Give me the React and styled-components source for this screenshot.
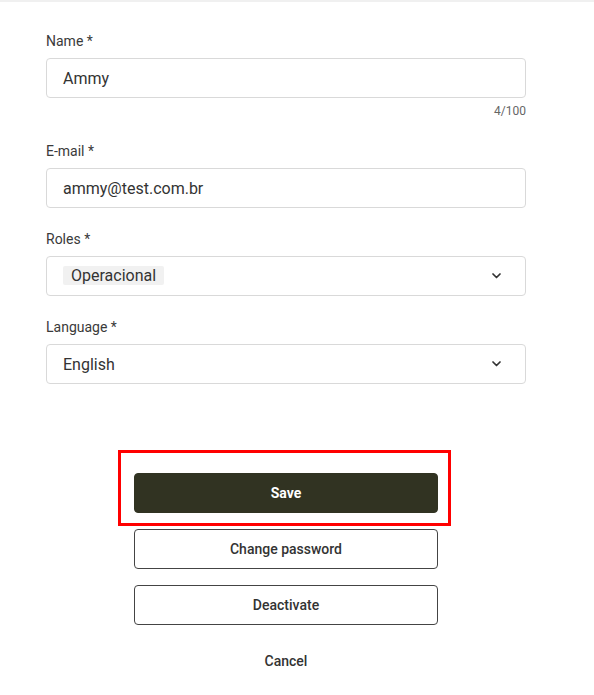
import React from "react";
import styled, { createGlobalStyle } from "styled-components";

const GlobalStyle = createGlobalStyle`
  html, body {
    margin: 0;
    padding: 0;
    background: #ffffff;
    font-family: Roboto, "Liberation Sans", Arial, sans-serif;
    color: #333333;
  }
`;

const Page = styled.div`
  border-top: 2px solid #f0f0f0;
  width: 594px;
  min-height: 693px;
  box-sizing: border-box;
`;

const Form = styled.form`
  width: 480px;
  margin-left: 46px;
  padding-top: 29px;
  display: flex;
  flex-direction: column;
`;

const Field = styled.div`
  display: flex;
  flex-direction: column;
  margin-bottom: ${(p) => (p.$tight ? "22px" : "21px")};
`;

const Label = styled.label`
  font-size: 14px;
  line-height: 20px;
  color: #3a3a3a;
  margin-bottom: 7px;
`;

const Box = styled.div`
  height: 40px;
  box-sizing: border-box;
  border: 1px solid #d9d9d9;
  border-radius: 4px;
  display: flex;
  align-items: center;
  padding: 0 ${(p) => (p.$select ? "24px" : "16px")} 0 16px;
  font-size: 16px;
  color: #333333;
`;

const Value = styled.span`
  flex: 1;
`;

const Chip = styled.span`
  background: #f1f1f1;
  border-radius: 2px;
  padding: 0 8px;
  line-height: 22px;
  font-size: 16px;
`;

const Counter = styled.div`
  font-size: 12px;
  line-height: 16px;
  color: #666666;
  text-align: right;
  margin-top: 5px;
`;

const Actions = styled.div`
  width: 304px;
  margin: 68px 0 0 88px;
  display: flex;
  flex-direction: column;
  gap: 16px;
`;

const Button = styled.button`
  position: relative;
  height: 40px;
  box-sizing: border-box;
  border-radius: 4px;
  font-family: Roboto, "Liberation Sans", Arial, sans-serif;
  font-size: 14px;
  font-weight: ${(p) => (p.$primary ? 700 : 500)};
  color: ${(p) => (p.$primary ? "#ffffff" : "#333333")};
  background: ${(p) => (p.$primary ? "#313322" : "#ffffff")};
  border: 1px solid ${(p) => (p.$primary ? "#313322" : "#444444")};
  ${(p) =>
    p.$highlight &&
    `
    &::after {
      content: "";
      position: absolute;
      top: -24px;
      left: -17px;
      right: -14px;
      bottom: -14px;
      border: 3px solid #ff0000;
      pointer-events: none;
    }
  `}
`;

const TextButton = styled(Button)`
  border-color: transparent;
  background: transparent;
`;

const Chevron = () => (
  <svg width="9" height="6" viewBox="0 0 9 6" fill="none">
    <path d="M1 1l3.5 3.5L8 1" stroke="#333" strokeWidth="1.7" strokeLinecap="round" strokeLinejoin="round" />
  </svg>
);

export default function App() {
  return (
    <Page>
      <GlobalStyle />
      <Form onSubmit={(e) => e.preventDefault()}>
        <Field $tight>
          <Label>Name *</Label>
          <Box>
            <Value>Ammy</Value>
          </Box>
          <Counter>4/100</Counter>
        </Field>
        <Field>
          <Label>E-mail *</Label>
          <Box>
            <Value>ammy@test.com.br</Value>
          </Box>
        </Field>
        <Field>
          <Label>Roles *</Label>
          <Box $select>
            <Value>
              <Chip>Operacional</Chip>
            </Value>
            <Chevron />
          </Box>
        </Field>
        <Field>
          <Label>Language *</Label>
          <Box $select>
            <Value>English</Value>
            <Chevron />
          </Box>
        </Field>
        <Actions>
          <Button type="submit" $primary $highlight>
            Save
          </Button>
          <Button type="button">Change password</Button>
          <Button type="button">Deactivate</Button>
          <TextButton type="button">Cancel</TextButton>
        </Actions>
      </Form>
    </Page>
  );
}
